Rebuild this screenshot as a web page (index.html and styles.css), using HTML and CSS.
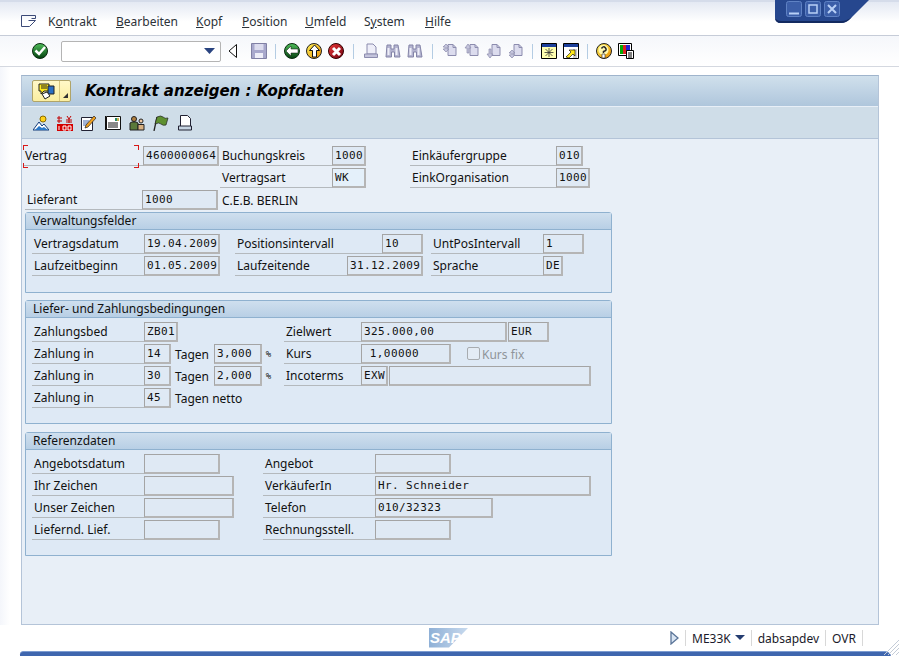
FILE: index.html
```html
<!DOCTYPE html>
<html lang="de">
<head>
    <meta charset="UTF-8">
    <title>Kontrakt anzeigen : Kopfdaten</title>
    <link rel="stylesheet" href="styles.css">
</head>
<body>
    <svg class="defs" width="0" height="0">
        <defs>
            <linearGradient id="gGreen" x1="0" y1="0" x2="0" y2="1"><stop offset="0" stop-color="#4fbf5a"/><stop offset="1" stop-color="#04400f"/></linearGradient>
            <linearGradient id="gYellow" x1="0" y1="0" x2="1" y2="1"><stop offset="0" stop-color="#fff45a"/><stop offset="1" stop-color="#e88a00"/></linearGradient>
            <linearGradient id="gRed" x1="0" y1="0" x2="1" y2="1"><stop offset="0" stop-color="#ef3a3a"/><stop offset="1" stop-color="#700010"/></linearGradient>
            <linearGradient id="gSap" x1="0" y1="0" x2="1" y2="0"><stop offset="0" stop-color="#8fb0d6"/><stop offset="1" stop-color="#c8daee"/></linearGradient>
            <symbol id="i-print" viewBox="0 0 16 16"><path d="M4 1h6l3 3v7H4z" fill="#eeeef8" stroke="#8c8cae"/><path d="M1.500 11h13v3.500h-13z" fill="#c4c4dc" stroke="#8c8cae"/></symbol>
            <symbol id="i-find" viewBox="0 0 16 16"><path d="M2 2h4v4h3V2h4l2 12H9.500V9h-3v5H1z" fill="#b4b4d0" stroke="#8484a8"/><path d="M3.500 5v7M11.500 5v7" stroke="#eeeef8" stroke-width="2"/></symbol>
            <symbol id="i-page" viewBox="0 0 16 16"><path d="M6 1.500h5l3 3v8H6z" fill="#dcdcee" stroke="#8c8cae"/><path d="M11 1.500v3h3" fill="none" stroke="#8c8cae"/></symbol>
        </defs>
    </svg>

    <!-- window buttons -->
    <div class="winbtns">
        <svg width="100" height="26" viewBox="0 0 100 26">
            <path d="M0 0h94L75 19q-4 4-9 4H6q-6 0-6-6z" fill="#26478e"/>
            <path d="M0 17q0 6 6 6h60q5 0 9-4l2-2q-5 4-11 4H6q-5 0-6-4z" fill="#132a60"/>
            <g fill="#3b5ea8" stroke="#5f82c4">
                <rect x="11.500" y="1.500" width="15" height="15" rx="2"/>
                <rect x="30.500" y="1.500" width="15" height="15" rx="2"/>
                <rect x="49.500" y="1.500" width="15" height="15" rx="2"/>
            </g>
            <path d="M14 13.500h10" stroke="#b9d0f6" stroke-width="2"/>
            <rect x="34" y="5" width="8" height="8" fill="none" stroke="#b9d0f6" stroke-width="1.500"/>
            <path d="M53 5l8 8M61 5l-8 8" stroke="#b9d0f6" stroke-width="2"/>
        </svg>
    </div>

    <div class="menubar">
        <svg class="menuicon" width="16" height="12" viewBox="0 0 16 12"><path d="M.5.500h14v3h-4M.5.500v11h8l6-6h-7" fill="none" stroke="#3c4a78"/></svg>
        <a class="m1"><span>K<u>o</u>ntrakt</span></a>
        <a class="m2"><u>B</u>earbeiten</a>
        <a class="m3"><u>K</u>opf</a>
        <a class="m4"><u>P</u>osition</a>
        <a class="m5"><u>U</u>mfeld</a>
        <a class="m6">S<u>y</u>stem</a>
        <a class="m7"><u>H</u>ilfe</a>
    </div>

    <div class="toolbar">
        <svg class="ico" viewBox="0 0 16 16"><circle cx="8" cy="8" r="7.500" fill="url(#gGreen)" stroke="#0a2a10"/><path d="M3.500 7.500l3.500 3.500 6-7" fill="none" stroke="#fff" stroke-width="2.500"/></svg>
        <div class="combo"><svg width="11" height="6" viewBox="0 0 11 6"><path d="M0 0h11L5.500 6z" fill="#2a4480"/></svg></div>
        <svg class="tri" width="10" height="14" viewBox="0 0 10 14"><path d="M8.500.500v13L1 7z" fill="#fff" stroke="#111"/></svg>
        <svg class="ico save" viewBox="0 0 16 16"><path d="M.5.500h15v15H.5z" fill="#a8a8cc" stroke="#8080a4"/><path d="M3.500 1h9v6h-9z" fill="#dcdcee"/><path d="M4 10h8v5H4z" fill="#eeeef8"/></svg>
        <i class="sep s1"></i>
        <svg class="ico" viewBox="0 0 16 16"><circle cx="8" cy="8" r="7.500" fill="url(#gGreen)" stroke="#0a2a10"/><path d="M2 8l5-5v3h7v4H7v3z" fill="#fff" stroke="#111" stroke-width=".5"/></svg>
        <svg class="ico g" viewBox="0 0 16 16"><circle cx="8" cy="8" r="7.500" fill="url(#gYellow)" stroke="#222"/><path d="M8.500 2l5 5.500h-3V14h-4V7.500h-3z" fill="#fff" stroke="#111"/></svg>
        <svg class="ico g" viewBox="0 0 16 16"><circle cx="8" cy="8" r="7.500" fill="url(#gRed)" stroke="#300"/><path d="M5 5l7 7M12 5l-7 7" stroke="#fff" stroke-width="3"/></svg>
        <i class="sep s2"></i>
        <svg class="ico"><use href="#i-print"/></svg>
        <svg class="ico g"><use href="#i-find"/></svg>
        <svg class="ico g"><use href="#i-find"/></svg>
        <i class="sep s2"></i>
        <svg class="ico"><use href="#i-page"/><path d="M4 1l3 3H5v2h2l-3 3-3-3h2V4H1z" fill="#c4c4dc" stroke="#8c8cae" stroke-width=".7"/></svg>
        <svg class="ico g"><use href="#i-page"/><path d="M4 1l3 4H5v5H3V5H1z" fill="#c4c4dc" stroke="#8c8cae" stroke-width=".7"/></svg>
        <svg class="ico g"><use href="#i-page"/><path d="M4 15l3-4H5V6H3v5H1z" fill="#c4c4dc" stroke="#8c8cae" stroke-width=".7"/></svg>
        <svg class="ico g"><use href="#i-page"/><path d="M4 15l3-3H5v-2h2L4 7l-3 3h2v2H1z" fill="#c4c4dc" stroke="#8c8cae" stroke-width=".7"/></svg>
        <i class="sep s3"></i>
        <svg class="ico" viewBox="0 0 16 16"><path d="M.5.500h15v15H.5z" fill="#ffffb0" stroke="#000"/><path d="M1 1h14v3H1z" fill="#1c3f9c"/><path d="M8 5v9M3.500 9.500h9M4.500 6l7 7M11.500 6l-7 7" stroke="#333" stroke-width=".8"/></svg>
        <svg class="ico g" viewBox="0 0 16 16"><path d="M.5.500h15v15H.5z" fill="#fff" stroke="#000"/><path d="M1 1h14v3H1z" fill="#1c3f9c"/><path d="M10 6h4v9h-4z" fill="#ccc"/><path d="M3 14l5-5-2-2h6v6l-2-2-4 4z" fill="#ffe81a" stroke="#000" stroke-width=".6"/></svg>
        <i class="sep s3"></i>
        <svg class="ico" viewBox="0 0 16 16"><circle cx="8" cy="8" r="7.500" fill="url(#gYellow)" stroke="#222"/><circle cx="7.500" cy="7" r="5" fill="#fff8b0"/><path d="M5.500 5.500q2-3 4 -.5t-2 3.500v1.500" fill="none" stroke="#222" stroke-width="1.500"/><path d="M6 11h3v4H6z" fill="#fff" stroke="#222" stroke-width=".6"/></svg>
        <svg class="ico g" viewBox="0 0 16 16"><path d="M.5.500h13v12H.5z" fill="#fff" stroke="#000"/><path d="M2 2h3v9H2z" fill="#0a0"/><path d="M5 2h3v9H5z" fill="#d22"/><path d="M8 2h4v9H8z" fill="#22c"/><path d="M8.500 7.500h7v8h-7z" fill="#fff" stroke="#000"/><path d="M10 10h4M10 12h4M10 14h4" stroke="#000"/></svg>
    </div>

    <div class="main">
        <div class="panel">
            <div class="titlebar">
                <div class="titlebtn">
                    <span class="tb-main">
                        <svg width="17" height="17" viewBox="0 0 17 17"><path d="M1 1h10v7H6l-3 3V8H1z" fill="#ffe81a" stroke="#222"/><path d="M3 3h6M3 5h6" stroke="#222"/><path d="M10 3h6v8h-6z" fill="#2a6fc4" stroke="#222"/><path d="M4 11l5-2 3 4-5 3z" fill="#fff" stroke="#222"/></svg>
                    </span>
                    <span class="tb-drop"><svg width="5" height="5" viewBox="0 0 5 5"><path d="M5 0v5H0z" fill="#333"/></svg></span>
                </div>
                <h1>Kontrakt anzeigen : Kopfdaten</h1>
            </div>
            <div class="apptools">
                <svg class="ico" viewBox="0 0 16 16"><circle cx="10" cy="4" r="3" fill="#ffd21a" stroke="#8a6a00"/><path d="M0 15l6-8 3 4 2-2 5 6z" fill="#fff" stroke="#123a78"/><path d="M2 15l4-4 3 2 2-1 4 3z" fill="#2a78c8"/></svg>
                <svg class="ico a2" viewBox="0 0 16 16"><path d="M0 9h16v7H0z" fill="#d40000"/><path d="M2 11v4M6 11h3v4H6zM11 11h3v4h-3z" fill="none" stroke="#fff"/><path d="M2 1v7M0 3h5M0 6h5M10 1l2 3 2-3M9 5h6M12 4v4M9 7h6" stroke="#c00000" fill="none"/></svg>
                <svg class="ico" viewBox="0 0 16 16"><path d="M.5 2.500h11v13H.5z" fill="#fff" stroke="#223"/><path d="M2 6h6M2 8h5M2 10h4" stroke="#46a"/><path d="M4 13l1-3 8-9 2 2-8 9z" fill="#f0a020" stroke="#222" stroke-width=".7"/></svg>
                <svg class="ico" viewBox="0 0 16 16"><path d="M1.500 1.500h14v13h-14z" fill="#fff" stroke="#111"/><path d="M.5 1v14" stroke="#111"/><path d="M3 8h10M3 10h10M3 12h10" stroke="#111"/><path d="M10 3h2v3h-2z" fill="#2a8a6a"/><path d="M12 3h2v3h-2z" fill="#c8b050"/></svg>
                <svg class="ico a5" viewBox="0 0 16 16"><circle cx="5" cy="4" r="2.500" fill="#b08040" stroke="#222"/><path d="M1 15V8l2-1h4l2 1v7z" fill="#5a7a3a" stroke="#222"/><circle cx="12" cy="6" r="2" fill="#f0c8a0" stroke="#222"/><path d="M9 15V9.500h6V15z" fill="#d8b080" stroke="#222"/></svg>
                <svg class="ico" viewBox="0 0 16 16"><path d="M1 16L4 2" stroke="#222" stroke-width="1.300"/><path d="M4 2q4-2 6 0t5 1l-2 7q-3 1-5-1t-6 0z" fill="#5e9030" stroke="#222" stroke-width=".7"/></svg>
                <svg class="ico" viewBox="0 0 16 16"><path d="M3.500.500h7l3 3v8h-10z" fill="#fff" stroke="#223"/><path d="M1.500 11h13v4h-13z" fill="#c6d4e2" stroke="#223"/></svg>
            </div>

            <div class="content">
                <div class="head">
                    <div class="row">
                        <span class="lbl focus w120">Vertrag</span>
                        <span class="fld w76">4600000064</span>
                        <span class="lbl w112 ml1">Buchungskreis</span>
                        <span class="fld w34">1000</span>
                        <span class="lbl w146 ml44">Einkäufergruppe</span>
                        <span class="fld w27">010</span>
                    </div>
                    <div class="row">
                        <span class="blank w197"></span>
                        <span class="lbl w112 ml1">Vertragsart</span>
                        <span class="fld w34 on">WK</span>
                        <span class="lbl w146 ml44">EinkOrganisation</span>
                        <span class="fld w34">1000</span>
                    </div>
                    <div class="row">
                        <span class="lbl w117 ml3">Lieferant</span>
                        <span class="fld w76">1000</span>
                        <span class="txt">C.E.B. BERLIN</span>
                    </div>
                </div>

                <section class="group g1">
                    <h2>Verwaltungsfelder</h2>
                    <div class="row">
                        <span class="lbl w112">Vertragsdatum</span>
                        <span class="fld w76">19.04.2009</span>
                        <span class="lbl w147 ml15">Positionsintervall</span>
                        <span class="fld w41">10</span>
                        <span class="lbl w112 ml8">UntPosIntervall</span>
                        <span class="fld w41">1</span>
                    </div>
                    <div class="row">
                        <span class="lbl w112">Laufzeitbeginn</span>
                        <span class="fld w76">01.05.2009</span>
                        <span class="lbl w112 ml15">Laufzeitende</span>
                        <span class="fld w76">31.12.2009</span>
                        <span class="lbl w112 ml8">Sprache</span>
                        <span class="fld w20">DE</span>
                    </div>
                </section>

                <section class="group g2">
                    <h2>Liefer- und Zahlungsbedingungen</h2>
                    <div class="row">
                        <span class="lbl w112">Zahlungsbed</span>
                        <span class="fld w34">ZB01</span>
                        <span class="lbl w77 ml106">Zielwert</span>
                        <span class="fld w146">325.000,00</span>
                        <span class="fld w41 ml1">EUR</span>
                    </div>
                    <div class="row">
                        <span class="lbl w112">Zahlung in</span>
                        <span class="fld w27">14</span>
                        <span class="txt tg">Tagen</span>
                        <span class="fld w48">3,000</span>
                        <span class="pct">%</span>
                        <span class="lbl w77 ml9">Kurs</span>
                        <span class="fld w90 right">1,00000</span>
                        <span class="chk"></span>
                        <span class="txt off">Kurs fix</span>
                    </div>
                    <div class="row">
                        <span class="lbl w112">Zahlung in</span>
                        <span class="fld w27">30</span>
                        <span class="txt tg">Tagen</span>
                        <span class="fld w48">2,000</span>
                        <span class="pct">%</span>
                        <span class="lbl w77 ml9">Incoterms</span>
                        <span class="fld w27">EXW</span>
                        <span class="fld w202 ml1"></span>
                    </div>
                    <div class="row">
                        <span class="lbl w112">Zahlung in</span>
                        <span class="fld w27">45</span>
                        <span class="txt tn">Tagen netto</span>
                    </div>
                </section>

                <section class="group g2">
                    <h2>Referenzdaten</h2>
                    <div class="row">
                        <span class="lbl w112">Angebotsdatum</span>
                        <span class="fld w76"></span>
                        <span class="lbl w112 ml43">Angebot</span>
                        <span class="fld w76"></span>
                    </div>
                    <div class="row">
                        <span class="lbl w112">Ihr Zeichen</span>
                        <span class="fld w90"></span>
                        <span class="lbl w112 ml29">VerkäuferIn</span>
                        <span class="fld w216">Hr. Schneider</span>
                    </div>
                    <div class="row">
                        <span class="lbl w112">Unser Zeichen</span>
                        <span class="fld w90"></span>
                        <span class="lbl w112 ml29">Telefon</span>
                        <span class="fld w118">010/32323</span>
                    </div>
                    <div class="row">
                        <span class="lbl w112">Liefernd. Lief.</span>
                        <span class="fld w76"></span>
                        <span class="lbl w112 ml43">Rechnungsstell.</span>
                        <span class="fld w76"></span>
                    </div>
                </section>
            </div>
        </div>
    </div>

    <div class="statusbar">
        <svg class="sap" width="39" height="20" viewBox="0 0 39 20">
            <path d="M0 0h39L20 19.500H0z" fill="url(#gSap)"/>
            <text x="1" y="15" class="saptext">SAP</text>
        </svg>
        <div class="sinfo">
            <svg class="playtri" width="9" height="14" viewBox="0 0 9 14"><path d="M1 1l7 6-7 6z" fill="#d8e4f2" stroke="#5a7498" stroke-width="1.300"/></svg>
            <span class="sitem si1">ME33K <svg width="10" height="6" viewBox="0 0 10 6"><path d="M0 0h10L5 5z" fill="#243c70"/></svg></span>
            <span class="sitem si2">dabsapdev</span>
            <span class="sitem si3">OVR</span>
        </div>
        <svg class="grip" width="18" height="16" viewBox="0 0 18 16"><path d="M18 1L3 16M18 5L7 16M18 9l-7 7M18 13l-3 3" stroke="#c4ccd8"/></svg>
    </div>
    <div class="bottombar"></div>
</body>
</html>
```
FILE: styles.css
```css
html, body {
    margin: 0;
    height: 656px;
    overflow: hidden;
}
body {
    font-family: "Noto Sans", Tahoma, sans-serif;
    font-size: 12px;
    color: #111;
    background: #fff;
    position: relative;
}
.defs {
    position: absolute;
}
.ico {
    width: 16px;
    height: 16px;
    flex: none;
}

/* Window buttons */
.winbtns {
    position: absolute;
    top: 0;
    left: 775px;
    height: 26px;
}

/* Menu */
.menubar {
    height: 36px;
    box-sizing: border-box;
    border-bottom: 1px solid #c6ccd8;
    border-top: 2px solid #d5dcea;
    background: linear-gradient(#e4e9f3, #fff 60%);
    display: flex;
    align-items: center;
    padding: 5px 0 0 21px;
    color: #2c3238;
}
.menuicon {
    margin-right: 11px;
}
.menubar a {
    display: block;
}
.m1 { width: 68px; }
.m2 { width: 80px; }
.m3 { width: 46px; }
.m4 { width: 63px; }
.m5 { width: 59px; }
.m6 { width: 61px; }

/* Toolbar */
.toolbar {
    height: 31px;
    box-sizing: border-box;
    border-bottom: 1px solid #d4d8e0;
    background: linear-gradient(#f5f7fb, #fff);
    display: flex;
    align-items: center;
    padding-left: 32px;
}
.toolbar .g {
    margin-left: 6px;
}
.combo {
    width: 160px;
    height: 21px;
    box-sizing: border-box;
    margin-left: 13px;
    border: 1px solid #b4b4b4;
    border-radius: 2px;
    background: #fff;
    display: flex;
    align-items: center;
    justify-content: flex-end;
    padding-right: 5px;
}
.tri {
    margin-left: 7px;
}
.save {
    margin-left: 13px;
}
.sep {
    width: 1px;
    height: 15px;
    background: #b4cce3;
    flex: none;
}
.s1 { margin: 0 8px; }
.s2 { margin: 0 9px; }
.s3 { margin: 0 8px; }

/* Main panel */
.main {
    padding: 8px 20px 0 21px;
    height: 558px;
    box-sizing: border-box;
    background: linear-gradient(90deg, #f4f6fb, #fff 10px);
}
.panel {
    height: 550px;
    box-sizing: border-box;
    border: 1px solid #b4c4d8;
    border-top-color: #9fb4cc;
    background: #e8eff7;
}
.titlebar {
    height: 31px;
    box-sizing: border-box;
    border-bottom: 1px solid #e8eff7;
    background: linear-gradient(#d0e0ec, #afc6dc);
    display: flex;
    align-items: center;
    padding-left: 10px;
}
.titlebtn {
    width: 39px;
    height: 22px;
    box-sizing: border-box;
    border: 1px solid #b0a468;
    border-radius: 2px;
    background: linear-gradient(#fff8c8, #fbeea0);
    display: flex;
}
.tb-main {
    width: 26px;
    display: flex;
    align-items: center;
    justify-content: center;
    border-right: 1px solid #d8c880;
}
.tb-drop {
    flex: 1;
    display: flex;
    align-items: flex-end;
    justify-content: center;
    padding-bottom: 3px;
}
h1 {
    margin: 0 0 0 14px;
    font-family: "DejaVu Sans", sans-serif;
    font-size: 15px;
    font-style: italic;
    font-weight: bold;
    color: #000;
}
.apptools {
    height: 32px;
    box-sizing: border-box;
    background: #cfdde8;
    border-bottom: 1px solid #b4c4d8;
    display: flex;
    align-items: center;
    gap: 8px;
    padding-left: 11px;
}

/* Form */
.content {
    padding: 7px 0 0 0;
}
.row {
    display: flex;
    height: 20px;
    margin-bottom: 2px;
    align-items: stretch;
}
.head {
    height: 66px;
}
.lbl {
    display: flex;
    align-items: center;
    box-sizing: border-box;
    border-bottom: 1px solid #b4b9bd;
    padding-left: 2px;
    white-space: nowrap;
}
.fld {
    display: flex;
    align-items: center;
    box-sizing: border-box;
    border: 1px solid #b5b5b5;
    border-top-color: #a4a4a4;
    border-left-color: #a4a4a4;
    border-bottom-width: 2px;
    border-right-width: 2px;
    background: #dfe9f4;
    padding-left: 2px;
    font-family: "DejaVu Sans Mono", monospace;
    font-size: 11px;
    letter-spacing: .4px;
    white-space: nowrap;
    overflow: hidden;
}
.on {
    background: #e4f0fa;
}
.right {
    justify-content: flex-end;
    padding-right: 30px;
}
.txt {
    display: flex;
    align-items: center;
    margin-left: 4px;
    white-space: nowrap;
}
.focus {
    margin-left: 1px;
    width: 121px;
    position: relative;
}
.focus::after {
    content: "";
    position: absolute;
    left: 0;
    top: -1px;
    width: 116px;
    height: 23px;
    --c: #d81818;
    background:
        linear-gradient(var(--c), var(--c)) 0 0 / 5px 1px,
        linear-gradient(var(--c), var(--c)) 0 0 / 1px 5px,
        linear-gradient(var(--c), var(--c)) 100% 0 / 5px 1px,
        linear-gradient(var(--c), var(--c)) 100% 0 / 1px 5px,
        linear-gradient(var(--c), var(--c)) 0 100% / 5px 1px,
        linear-gradient(var(--c), var(--c)) 0 100% / 1px 5px,
        linear-gradient(var(--c), var(--c)) 100% 100% / 5px 1px,
        linear-gradient(var(--c), var(--c)) 100% 100% / 1px 5px;
    background-repeat: no-repeat;
}

.group {
    width: 587px;
    box-sizing: border-box;
    margin-left: 3px;
    border: 1px solid #8fb1cf;
    border-radius: 3px 3px 0 0;
    background: #dee9f5;
}
.g1 {
    height: 81px;
    margin-bottom: 7px;
}
.g2 {
    height: 124px;
    margin-bottom: 8px;
}
.group h2 {
    margin: 0 0 4px;
    height: 17px;
    box-sizing: border-box;
    border-bottom: 1px solid #8fb1cf;
    background: linear-gradient(#cfdfee, #b8cfe5);
    padding-left: 7px;
    font-size: 12px;
    line-height: 16px;
    font-weight: normal;
}
.group .row {
    margin-left: 6px;
}

.w20 { width: 20px; }
.w27 { width: 27px; }
.w34 { width: 34px; }
.w41 { width: 41px; }
.w48 { width: 48px; }
.w76 { width: 76px; }
.w77 { width: 77px; }
.w90 { width: 90px; }
.w112 { width: 112px; }
.w117 { width: 117px; }
.w118 { width: 118px; }
.w120 { width: 120px; }
.w146 { width: 146px; }
.w147 { width: 147px; }
.w197 { width: 197px; }
.w202 { width: 202px; }
.w216 { width: 216px; }
.ml1 { margin-left: 1px; }
.ml3 { margin-left: 3px; }
.ml8 { margin-left: 8px; }
.ml9 { margin-left: 9px; }
.ml15 { margin-left: 15px; }
.ml29 { margin-left: 29px; }
.ml43 { margin-left: 43px; }
.ml44 { margin-left: 44px; }
.ml106 { margin-left: 106px; }

.tg {
    width: 39px;
    margin-left: 4px;
}
.tn {
    margin-left: 4px;
}
.pct {
    display: flex;
    align-items: center;
    justify-content: center;
    width: 13px;
    font-family: "DejaVu Sans Mono", monospace;
    font-size: 9px;
}
.chk {
    width: 13px;
    height: 13px;
    margin: 3px 0 0 16px;
    box-sizing: border-box;
    border: 1px solid #a8acb0;
    border-radius: 2px;
    background: #e4ecf5;
}
.off {
    margin-left: 2px;
    color: #8f9499;
}

/* Status bar */
.statusbar {
    height: 26px;
    display: flex;
    align-items: center;
    position: relative;
    background: #fff;
    padding-left: 429px;
}
.sap {
    flex: none;
}
.saptext {
    font-family: "Liberation Sans", sans-serif;
    font-size: 15px;
    font-weight: bold;
    font-style: italic;
    fill: #fff;
}
.sinfo {
    display: flex;
    align-items: center;
    margin-left: 202px;
    color: #1a1a2a;
}
.playtri {
    margin-right: 6px;
}
.sitem {
    display: flex;
    align-items: center;
    gap: 4px;
    height: 16px;
    padding: 0 6px;
    border-left: 1px solid #d8d8d8;
}
.si3 {
    border-right: 1px solid #d8d8d8;
}
.grip {
    position: absolute;
    right: 0;
    bottom: -4px;
}
.bottombar {
    height: 5px;
    margin: 0 8px 0 20px;
    border-radius: 6px 10px 0 0;
    background: #3f66ae;
    border-top: 1px solid #7c9bd0;
}
```
